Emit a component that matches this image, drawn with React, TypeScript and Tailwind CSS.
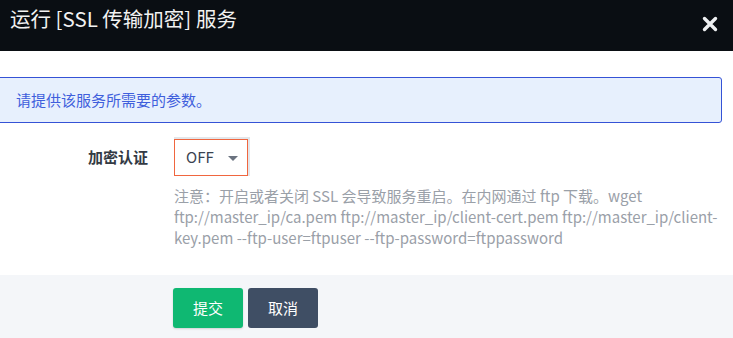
const font = { fontFamily: '"Noto Sans CJK SC", "Noto Sans", sans-serif' }

export default function App() {
  return (
    <div className="w-[733px] h-[338px] bg-white overflow-hidden flex flex-col" style={font}>
      {/* header */}
      <div className="h-[51px] bg-[#0a0e13] flex items-center justify-between pl-[10px] pr-[15px] shrink-0">
        <span className="text-[20.5px] text-[#f2f2f2] leading-none -mt-[15px]">运行 [SSL 传输加密] 服务</span>
        <svg viewBox="0 0 16 16" className="w-[16px] h-[16px] -mt-[4px]">
          <path d="M2.5 2.5 L13.5 13.5 M13.5 2.5 L2.5 13.5" stroke="#eef0f2" strokeWidth="3.4" strokeLinecap="round" />
        </svg>
      </div>

      {/* alert */}
      <div className="mt-[26px] -ml-[4px] mr-[11px] h-[46px] border border-[#3553d6] rounded-[3px] bg-[#e7f0fd] flex items-center pl-[19px]">
        <span className="text-[15px] text-[#3f5fdc]">请提供该服务所需要的参数。</span>
      </div>

      {/* form */}
      <div className="flex mt-[16px]">
        <div className="w-[148px] shrink-0 flex justify-end pt-[7px]">
          <span className="text-[15px] font-bold text-[#333a44]">加密认证</span>
        </div>
        <div className="ml-[26px] flex flex-col">
          <div className="w-[74px] h-[37px] border border-[#f0663f] shadow-[1px_-1px_0_1px_#e3e6ea] flex items-center justify-between pl-[11px] pr-[9px]">
            <span className="text-[15px] text-[#3a4350]">OFF</span>
            <span className="w-0 h-0 border-l-[5px] border-r-[5px] border-t-[5px] border-l-transparent border-r-transparent border-t-[#6b7380] mt-[1px]" />
          </div>
          <p className="mt-[9px] w-[548px] text-[15px] leading-[21px] text-[#9aa0a8]">
            注意：开启或者关闭 SSL 会导致服务重启。在内网通过 ftp 下载。wget ftp://master_ip/ca.pem ftp://master_ip/client-cert.pem ftp://master_ip/client-key.pem --ftp-user=ftpuser --ftp-password=ftppassword
          </p>
        </div>
      </div>

      {/* footer */}
      <div className="mt-auto h-[63px] bg-[#f4f6f9] flex items-start pt-[13px] pl-[173px] gap-[5px]">
        <button className="w-[70px] h-[40px] rounded-[3px] bg-[#0fb872] text-white text-[15px] shadow-[0_1px_2px_rgba(0,0,0,0.15)]">提交</button>
        <button className="w-[70px] h-[40px] rounded-[3px] bg-[#3f4e64] text-white text-[15px]">取消</button>
      </div>
    </div>
  )
}
